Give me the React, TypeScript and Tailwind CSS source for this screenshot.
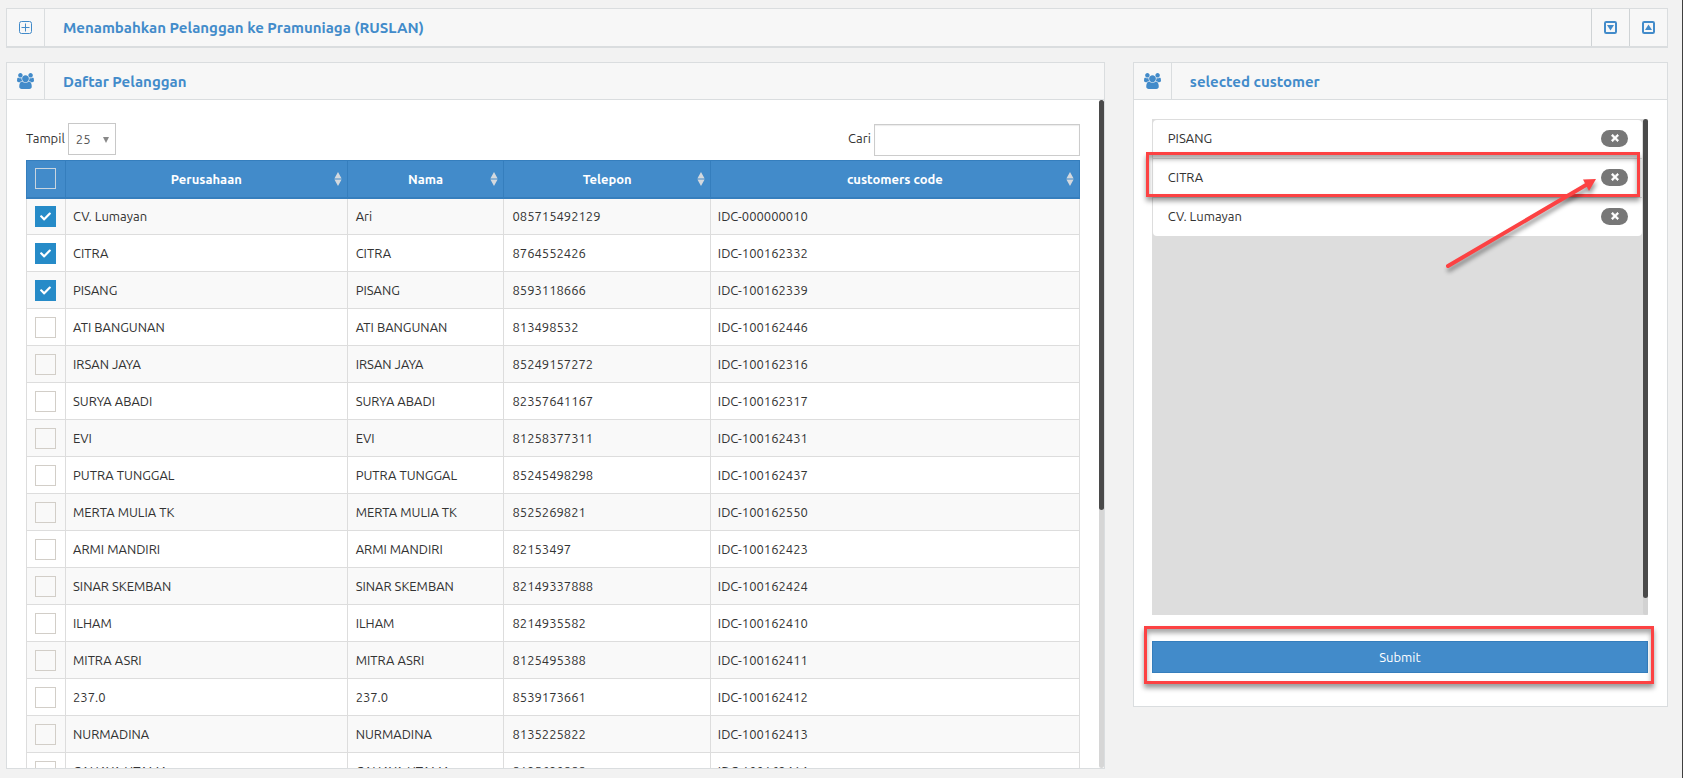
import { useState } from "react";
import { FaCheck, FaTimes } from "react-icons/fa";

type Customer = { name: string; contact: string; phone: string; code: string };

const customers: Customer[] = [
  { name: "CV. Lumayan", contact: "Ari", phone: "085715492129", code: "IDC-000000010" },
  { name: "CITRA", contact: "CITRA", phone: "8764552426", code: "IDC-100162332" },
  { name: "PISANG", contact: "PISANG", phone: "8593118666", code: "IDC-100162339" },
  { name: "ATI BANGUNAN", contact: "ATI BANGUNAN", phone: "813498532", code: "IDC-100162446" },
  { name: "IRSAN JAYA", contact: "IRSAN JAYA", phone: "85249157272", code: "IDC-100162316" },
  { name: "SURYA ABADI", contact: "SURYA ABADI", phone: "82357641167", code: "IDC-100162317" },
  { name: "EVI", contact: "EVI", phone: "81258377311", code: "IDC-100162431" },
  { name: "PUTRA TUNGGAL", contact: "PUTRA TUNGGAL", phone: "85245498298", code: "IDC-100162437" },
  { name: "MERTA MULIA TK", contact: "MERTA MULIA TK", phone: "8525269821", code: "IDC-100162550" },
  { name: "ARMI MANDIRI", contact: "ARMI MANDIRI", phone: "82153497", code: "IDC-100162423" },
  { name: "SINAR SKEMBAN", contact: "SINAR SKEMBAN", phone: "82149337888", code: "IDC-100162424" },
  { name: "ILHAM", contact: "ILHAM", phone: "8214935582", code: "IDC-100162410" },
  { name: "MITRA ASRI", contact: "MITRA ASRI", phone: "8125495388", code: "IDC-100162411" },
  { name: "237.0", contact: "237.0", phone: "8539173661", code: "IDC-100162412" },
  { name: "NURMADINA", contact: "NURMADINA", phone: "8135225822", code: "IDC-100162413" },
  { name: "CAHAYA UTAMA", contact: "CAHAYA UTAMA", phone: "8125620888", code: "IDC-100162414" },
];

function PlusSquareIcon() {
  return (
    <svg viewBox="0 0 13 13" className="size-[13px]" fill="none" stroke="currentColor" aria-hidden="true">
      <rect x="0.5" y="0.5" width="12" height="12" rx="2" />
      <path d="M6.5 2.5v8M2.5 6.5h8" />
    </svg>
  );
}

function CaretSquareIcon({ up = false }: { up?: boolean }) {
  return (
    <svg viewBox="0 0 13 13" className="size-[13px]" aria-hidden="true">
      <rect x="1" y="1" width="11" height="11" rx="1.2" fill="none" stroke="currentColor" strokeWidth="2" />
      <path d={up ? "M6.5 3.5 10 9H3Z" : "M6.5 9.500 3 4h7Z"} fill="currentColor" />
    </svg>
  );
}

function UsersIcon() {
  return (
    <svg viewBox="0 0 1920 1792" className="h-[16px] w-[17px]" fill="currentColor" aria-hidden="true">
      <path d="M593 896q-162 5-265 128H194q-82 0-138-40.500T0 865q0-353 124-353 6 0 43.500 21t97.500 42.500T384 597q67 0 133-23-5 37-5 66 0 139 81 256zM1664 1533q0 120-73 189.500t-194 69.500H523q-121 0-194-69.500T256 1533q0-53 3.500-103.500t14-109T300 1212t43-97.500 62-81 85.500-53.500T602 960q10 0 43 21.500t73 48 107 48 135 21.500 135-21.500 107-48 73-48 43-21.500q61 0 111.500 20t85.500 53.500 62 81 43 97.500 26.500 108.500 14 109 3.500 103.500zM640 256q0 106-75 181t-181 75-181-75-75-181 75-181T384 0t181 75 75 181zM1344 640q0 159-112.500 271.500T960 1024 688.500 911.500 576 640t112.500-271.500T960 256t271.500 112.500T1344 640zM1920 865q0 78-56 118.500t-138 40.500h-134q-103-123-265-128 81-117 81-256 0-29-5-66 66 23 133 23 59 0 119-21.500t97.500-42.500 43.500-21q124 0 124 353zM1792 256q0 106-75 181t-181 75-181-75-75-181 75-181 181-75 181 75 75 181z" />
    </svg>
  );
}

function SortIcon() {
  return (
    <svg viewBox="0 0 8 14" className="h-[14px] w-[8px] shrink-0" fill="#d4d9de" aria-hidden="true">
      <path d="M4 0 7.600 6.400H0.400ZM4 14 0.400 7.600h7.200Z" />
    </svg>
  );
}

function Tick({ label, checked, onChange, light = false }: { label: string; checked: boolean; onChange: () => void; light?: boolean }) {
  return (
    <label className="relative ml-[8px] block size-[21px] cursor-pointer">
      <input
        type="checkbox"
        aria-label={label}
        checked={checked}
        onChange={onChange}
        className={`block size-full appearance-none border checked:border-[#268bc8] checked:bg-[#268bc8] ${light ? "border-[#c9d5df]" : "border-[#d2cec8]"}`}
      />
      {checked && <FaCheck className="pointer-events-none absolute inset-[5px] size-[11px] text-white" aria-hidden="true" />}
    </label>
  );
}

function PanelHeader({ title }: { title: string }) {
  return (
    <div className="flex h-[37px] items-stretch border-b border-[#dadddf] bg-[#f7f7f7] text-[#428bca]">
      <span className="flex w-[38px] items-center justify-center border-r border-[#dadddf]">
        <UsersIcon />
      </span>
      <h2 className="flex items-center pt-[2px] pl-[18px] text-[15px] font-bold">{title}</h2>
    </div>
  );
}

export default function App() {
  const [chosen, setChosen] = useState<string[]>(["PISANG", "CITRA", "CV. Lumayan"]);
  const toggle = (name: string) =>
    setChosen((list) => (list.includes(name) ? list.filter((n) => n !== name) : [...list, name]));
  const all = chosen.length === customers.length;

  return (
    <div className="h-screen overflow-hidden border-r border-[#3f3f3f] bg-[#f2f2f2] pt-[8px] pr-[14px] pl-[6px] font-['Ubuntu','Noto_Sans',sans-serif] text-[13px] leading-[20px] text-[#333]">
      <header className="flex h-[40px] items-stretch border border-b-2 border-[#dadddf] bg-[#f7f7f7] text-[#428bca]">
        <span className="flex w-[38px] items-center justify-center border-r border-[#dadddf]">
          <PlusSquareIcon />
        </span>
        <h1 className="flex flex-1 items-center pl-[18px] text-[15px] font-bold">Menambahkan Pelanggan ke Pramuniaga (RUSLAN)</h1>
        <button type="button" aria-label="Expand" className="flex w-[38px] items-center justify-center border-l border-[#cfd3d5]">
          <CaretSquareIcon />
        </button>
        <button type="button" aria-label="Collapse" className="flex w-[38px] items-center justify-center border-l border-[#cfd3d5]">
          <CaretSquareIcon up />
        </button>
      </header>

      <main className="mt-[14px] flex items-start gap-[28px]">
        <section className="min-w-0 flex-1 border border-[#dadddf] bg-white">
          <PanelHeader title="Daftar Pelanggan" />
          <div className="flex h-[calc(100vh-110px)]">
            <div className="min-w-0 flex-1 overflow-hidden pt-[23px] pr-[19px] pl-[19px]">
              <div className="flex h-[37px] items-start justify-between">
                <label className="flex gap-[3px]">
                  <span className="pt-[5px]">Tampil</span>
                  <span className="relative">
                    <select className="h-[32px] w-[48px] appearance-none border border-[#c8c8c8] bg-white pl-[7px] text-[13px] text-[#555]">
                      <option>25</option>
                      <option>50</option>
                      <option>100</option>
                    </select>
                    <svg viewBox="0 0 6 6" className="pointer-events-none absolute top-[14px] right-[7px] size-[6px]" fill="#888" aria-hidden="true">
                      <path d="M0 0h6L3 6Z" />
                    </svg>
                  </span>
                </label>
                <label className="flex gap-[3px]">
                  <span className="pt-[5px]">Cari</span>
                  <input type="search" className="mt-px h-[32px] w-[206px] border border-[#ccc] bg-white px-2 shadow-[inset_0_1px_1px_rgba(0,0,0,0.08)]" />
                </label>
              </div>

              <table className="w-full table-fixed border-collapse">
                <colgroup>
                  <col className="w-[39px]" />
                  <col className="w-[26.75%]" />
                  <col className="w-[14.9%]" />
                  <col className="w-[19.6%]" />
                  <col />
                </colgroup>
                <thead>
                  <tr className="h-[37px] bg-[#428bca] text-white">
                    <th className="border border-b-2 border-[#357ebd] p-0">
                      <Tick label="Pilih semua" light checked={all} onChange={() => setChosen(all ? [] : customers.map((c) => c.name))} />
                    </th>
                    {["Perusahaan", "Nama", "Telepon", "customers code"].map((title) => (
                      <th key={title} className="border border-b-2 border-[#357ebd] p-0 pr-[5px] font-bold">
                        <span className="flex items-center">
                          <span className="flex-1 pl-[13px]">{title}</span>
                          <SortIcon />
                        </span>
                      </th>
                    ))}
                  </tr>
                </thead>
                <tbody>
                  {customers.map((c) => (
                    <tr key={c.code} className="h-[37px] odd:bg-[#f9f9f9]">
                      <td className="border border-[#ddd] p-0">
                        <Tick label={c.name} checked={chosen.includes(c.name)} onChange={() => toggle(c.name)} />
                      </td>
                      <td className="border border-[#ddd] px-[7px] py-0">{c.name}</td>
                      <td className="border border-[#ddd] px-[8px] py-0">{c.contact}</td>
                      <td className="border border-[#ddd] px-[8px] py-0">{c.phone}</td>
                      <td className="border border-[#ddd] px-[7px] py-0">{c.code}</td>
                    </tr>
                  ))}
                </tbody>
              </table>
            </div>
            <div className="w-[5px] rounded-[3px] bg-[#d6d6d6]">
              <div className="h-[410px] rounded-[3px] bg-[#4a4a4a]" />
            </div>
          </div>
        </section>

        <aside className="w-[32.2%] border border-[#dadddf] bg-white">
          <PanelHeader title="selected customer" />
          <div className="pt-[19px] pr-[19px] pb-[33px] pl-[18px]">
            <div className="relative flex h-[496px] bg-[#ddd] pt-px pl-px">
              <ul className="mr-px flex-1">
                {chosen.map((name) => (
                  <li key={name} className="flex h-[39px] items-center justify-between border-b border-[#ddd] bg-white pr-[14px] pb-[2px] pl-[15px] first:rounded-t-[4px] last:h-[38px] last:rounded-b-[4px] last:border-b-0">
                    {name}
                    <button type="button" aria-label={`Hapus ${name}`} onClick={() => toggle(name)} className="flex h-[17px] w-[27px] items-center justify-center rounded-full bg-[#777] text-white">
                      <FaTimes className="size-[10px]" strokeWidth={40} stroke="currentColor" />
                    </button>
                  </li>
                ))}
              </ul>
              <div className="-mt-px w-[5px] rounded-[3px] bg-[#d2d2d2]">
                <div className="h-[479px] rounded-[3px] bg-[#4a4a4a]" />
              </div>
              <div className="pointer-events-none absolute top-[33px] right-[8px] -left-[6px] h-[45px] border-3 border-[#fc4243] shadow-[0_4px_5px_rgba(0,0,0,0.4),inset_0_4px_5px_rgba(0,0,0,0.35)]" />
              <svg viewBox="0 0 160 100" className="pointer-events-none absolute top-[52px] right-[46px] h-[100px] w-[160px] drop-shadow-[1px_4px_2px_rgba(0,0,0,0.4)]" aria-hidden="true">
                <path d="M6 95 144 14" stroke="#fc4243" strokeWidth="4" strokeLinecap="round" />
                <path d="M154 8 147 20 141 8.500Z" fill="#fc4243" />
              </svg>
            </div>
            <div className="relative mt-[26px]">
              <button type="button" className="block h-[32px] w-full border border-[#357ebd] bg-[#428bca] text-white">
                Submit
              </button>
              <div className="pointer-events-none absolute -top-[15px] -right-[6px] -bottom-[11px] -left-[8px] border-3 border-[#fc4243] shadow-[0_4px_5px_rgba(0,0,0,0.4),inset_0_4px_5px_rgba(0,0,0,0.35)]" />
            </div>
          </div>
        </aside>
      </main>
    </div>
  );
}
